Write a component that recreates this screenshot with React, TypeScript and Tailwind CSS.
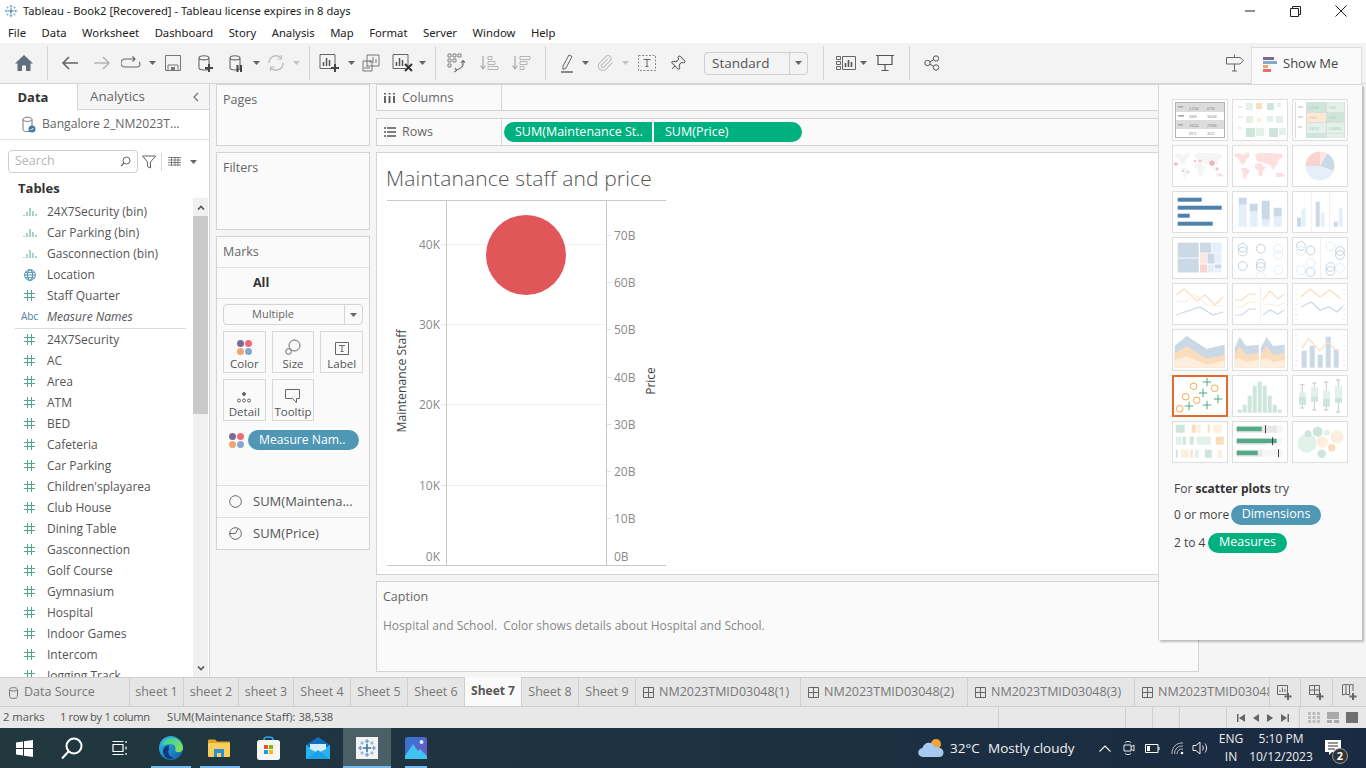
import React from "react";
import { Paperclip, Pin } from "lucide-react";

const fields = ["24X7Security", "AC", "Area", "ATM", "BED", "Cafeteria", "Car Parking", "Children'splayarea", "Club House", "Dining Table", "Gasconnection", "Golf Course", "Gymnasium", "Hospital", "Indoor Games", "Intercom", "Jogging Track"];
const sheets = [
  ["sheet 1", "w-[54px]"],
  ["sheet 2", "w-[55px]"],
  ["sheet 3", "w-[55px]"],
  ["Sheet 4", "w-[57px]"],
  ["Sheet 5", "w-[57px]"],
  ["Sheet 6", "w-[57px]"],
];

type RectT = [number, number, number, number, string];
const G1 = "#e2f1ea", G2 = "#cde5da", O1 = "#fdeedd", O2 = "#fbdcbc", B1 = "#e4eff9", B2 = "#cbd9e7", P1 = "#fde5e2", P2 = "#f8d3d0";

const Rects = ({ d }: { d: RectT[] }) => (
  <>
    {d.map((r, i) => (
      <rect key={i} x={r[0]} y={r[1]} width={r[2]} height={r[3]} fill={r[4]} />
    ))}
  </>
);

const Rings = ({ d }: { d: [number, number, string][] }) => (
  <>
    {d.map((c, i) => (
      <circle key={i} cx={c[0]} cy={c[1]} r="4.4" fill="none" stroke={c[2]} strokeWidth="1" />
    ))}
  </>
);

const Line = ({ p, c }: { p: string; c: string }) => <polyline points={p} fill="none" stroke={c} strokeWidth="1.2" />;

const SideTicks = () => (
  <>
    {[6, 11, 16, 21, 26, 31, 36].map((y) => (
      <g key={y}>
        <rect x="3" y={y} width="2.5" height="0.8" fill="#e8e8e8" />
        <rect x="51" y={y} width="2.5" height="0.8" fill="#e8e8e8" />
      </g>
    ))}
  </>
);

const Thumb = ({ children, selected }: { children?: React.ReactNode; selected?: boolean }) => (
  <svg viewBox="0 0 56 42" className="w-[56px] h-[42px] block">
    <rect x={selected ? 1 : 0.5} y={selected ? 1 : 0.5} width={selected ? 54 : 55} height={selected ? 40 : 41} fill="#fff" stroke={selected ? "#e06a30" : "#dedede"} strokeWidth={selected ? 2 : 1} />
    {children}
  </svg>
);

const World = ({ fill }: { fill: string }) => (
  <g fill={fill}>
    <path d="M2 9 L8 8 L11 10 L18 9 L17 12 L14 14 L13 17 L11 20 L8 17 L6 13 L3 12 Z" />
    <path d="M12 8 L17 7.500 L17 9 L13 10 Z" />
    <path d="M9 23 L14 23 L18 26 L15 30 L13 35 L12 35 L11 29 Z" />
    <path d="M23 10 L27 8 L38 8 L50 9 L51 12 L47 14 L46 18 L43 22 L41 25 L38 20 L34 19 L30 17 L26 17 L24 14 Z" />
    <path d="M23 19 L29 18 L31 21 L34 22 L31 26 L30 31 L27 31 L26 25 L23 23 Z" />
    <path d="M44 28 L50 28 L53 31 L50 32 L44 32 Z" />
  </g>
);

const ThumbGrid = () => (
  <div className="grid grid-cols-3 gap-1 w-[176px]">
    <Thumb>
      <Rects d={[[3, 3, 50, 36, "#b3b3b3"], [4, 4, 48, 34, "#fff"], [4, 4, 48, 9, "#dcdcdc"], [4, 21, 48, 9, "#dcdcdc"], [6, 7, 5, 1.6, "#a8a8a8"], [6, 16, 6, 1.6, "#a8a8a8"], [6, 25, 5, 1.6, "#a8a8a8"]]} />
      <g fontSize="4.4" fill="#8a8a8a" fontFamily="'Liberation Sans', sans-serif">
        <text x="17" y="10.5">1234</text><text x="35" y="10.5">678</text>
        <text x="17" y="19">368</text><text x="35" y="19">3034</text>
        <text x="17" y="27.5">2620</text><text x="35" y="27.5">2936</text>
        <text x="17" y="36">971</text><text x="35" y="36">322</text>
      </g>
    </Thumb>
    <Thumb>
      <Rects d={[[6, 7, 5, 2, "#eee"], [6, 17, 5, 2, "#eee"], [6, 28, 4, 2, "#eee"], [14, 4, 7, 7, G1], [24, 4, 6, 6, O2], [35, 4, 7, 7, G2], [45, 4, 4, 4, G1], [14, 17, 7, 7, G1], [25, 19, 4, 4, O1], [35, 17, 6, 6, G1], [44, 17, 7, 7, G1], [14, 29, 9, 9, G2], [24, 29, 8, 8, G1], [37, 29, 9, 9, G2], [47, 29, 7, 7, G1]]} />
    </Thumb>
    <Thumb>
      <Rects d={[[3, 3, 50, 36, "#dcdcdc"], [4, 3, 10, 36, "#fff"], [6, 7, 5, 2, "#ddd"], [6, 17, 5, 2, "#ddd"], [6, 27, 4, 2, "#ddd"], [15, 3, 19, 10, G2], [35, 3, 17, 10, G1], [15, 14, 19, 9, "#fde9d3"], [35, 14, 17, 9, G2], [15, 24, 19, 10, G1], [35, 24, 17, 10, G1], [15, 35, 19, 4, G2], [35, 35, 17, 4, G1]]} />
      <g fontSize="4.4" fill="#b5c9bf" fontFamily="'Liberation Sans', sans-serif">
        <text x="17" y="10">1234</text><text x="37" y="10">546</text>
        <text x="17" y="20" fill="#d9c3ad">368</text><text x="37" y="20">310</text>
        <text x="17" y="31">2620</text><text x="37" y="31">53890</text>
      </g>
    </Thumb>
    <Thumb>
      <World fill="#f5f5f5" />
      <g fill="#eec4c8">
        <circle cx="4" cy="19" r="2" /><circle cx="40" cy="18" r="2.6" fill="#e9b5bb" /><circle cx="28" cy="16" r="1.600" /><circle cx="45" cy="24" r="1.700" /><circle cx="11" cy="26" r="1.100" /><circle cx="16" cy="27" r="1.500" fill="#f8dcd4" /><circle cx="48" cy="30" r="1" /><circle cx="23" cy="16" r="1.200" />
      </g>
    </Thumb>
    <Thumb><World fill="#fde0dd" /></Thumb>
    <Thumb>
      <path d="M28 21 L13.5 21 A14.5 14.5 0 0 1 28 6.5 Z" fill={P2} />
      <path d="M28 21 L28 6.5 A14.5 14.5 0 0 1 35.25 8.44 Z" fill={P1} />
      <path d="M28 21 L35.25 8.44 A14.5 14.5 0 0 1 41.63 25.96 Z" fill={B2} />
      <path d="M28 21 L41.63 25.96 A14.5 14.5 0 0 1 13.5 21 Z" fill={B1} />
    </Thumb>
    <Thumb>
      <Rects d={[[5.7, 6.7, 24, 4, "#4f81ab"], [5.7, 14.7, 44, 4, "#4f81ab"], [5.7, 22.7, 12, 4, "#4f81ab"], [5.7, 30.7, 35, 4, "#4f81ab"]]} />
    </Thumb>
    <Thumb>
      <Rects d={[[6.7, 6.7, 8, 7, B2], [6.7, 13.7, 8, 22, B1], [17.7, 12.7, 8, 8, B2], [17.7, 20.7, 8, 15, B1], [29.7, 9.7, 8, 19, B2], [29.7, 28.7, 8, 7, B1], [41.7, 16.7, 8, 9, B2], [41.7, 25.7, 8, 10, B1]]} />
    </Thumb>
    <Thumb>
      <Rects d={[[19, 1, 0.8, 40, "#eee"], [37, 1, 0.8, 40, "#eee"], [5, 26.7, 4, 9, B2], [9.5, 17.7, 4, 18, B1], [23.7, 10.7, 4, 25, B2], [28.7, 21.7, 4, 14, B1], [41.7, 30.7, 4, 5, B2], [46.7, 16.7, 4, 19, B1]]} />
    </Thumb>
    <Thumb>
      <Rects d={[[5.7, 5.7, 21, 15, B2], [28, 5.7, 11, 10, B2], [39.5, 5.7, 10, 10, B1], [5.7, 21.5, 21, 14, B2], [28, 16.5, 7, 10, P1], [35.5, 16.5, 7, 10, B2], [43, 16.5, 6.5, 10, B1], [28, 27.5, 7, 8, P2], [35.5, 27.5, 7, 8, B1], [43, 27.5, 6.5, 4, B2], [43, 32.5, 6.5, 3, B1]]} />
    </Thumb>
    <Thumb>
      <Rings d={[[10.7, 10.7, "#c3d3e2"], [10.7, 14.5, "#c3d3e2"], [10.7, 29, "#c3d3e2"], [28.7, 11.7, "#c3d3e2"], [28.7, 26.5, "#c3d3e2"], [28.7, 30, "#c3d3e2"], [46.3, 11.7, B1], [46.3, 18, B1], [46.3, 33, B1], [28.7, 39, B1]]} />
    </Thumb>
    <Thumb>
      <Rings d={[[9, 9, "#c3d3e2"], [9, 14, B1], [18.5, 13.5, "#c3d3e2"], [18.5, 26, B1], [9, 33, B1], [18.5, 35, "#c3d3e2"], [38.5, 9.5, B1], [48, 14, "#c3d3e2"], [48, 18, "#c3d3e2"], [38.5, 30, "#c3d3e2"], [38.5, 34, "#c3d3e2"], [48, 31, B1]]} />
      <rect x="28" y="1" width="0.8" height="40" fill="#eee" />
    </Thumb>
    <Thumb>
      <Line p="4.7,11.7 12,5.7 25,18 33,12 43,22 51,14" c={O2} />
      <Line p="4,18 14,19 22,11 35,22 51,23" c={O1} />
      <Line p="4,32 28,24 41,32 51,29" c={B2} />
    </Thumb>
    <Thumb>
      <rect x="28" y="1" width="0.8" height="40" fill="#eee" />
      <Line p="3,17 10,17 17,11 24,11" c={O2} /><Line p="3,24 10,24 17,19 24,19" c={O1} /><Line p="3,32 10,32 17,26 24,26" c={B2} />
      <Line p="31,17 38,8 46,16 52,11" c={O2} /><Line p="31,22 38,21 46,23 52,20" c={O1} /><Line p="31,32 38,27 46,31 52,27" c={B2} />
    </Thumb>
    <Thumb>
      <SideTicks />
      <Line p="9,14 18,6 28,14 38,7 49,16" c={O2} />
      <Line p="9,24 19,19 28,27 37,24 45,29 51,23" c={B2} />
    </Thumb>
    <Thumb>
      <polygon points="2.7,16.7 14.7,7 34.7,19.7 52.7,15.7 52.7,38.7 2.7,38.7" fill={B2} />
      <polygon points="2.7,24 14.7,17.3 34.7,29.7 52.7,25.7 52.7,38.7 2.7,38.7" fill={O2} />
      <polygon points="2.7,31 14.7,27.3 34.7,35.7 52.7,31.7 52.7,38.7 2.7,38.7" fill={O1} />
    </Thumb>
    <Thumb>
      <polygon points="2.7,19 7.7,7.7 14,17 26.7,15.7 26.7,38.7 2.7,38.7" fill={B2} />
      <polygon points="2.7,25 7.7,17 14,26 26.7,24 26.7,38.7 2.7,38.7" fill={O2} />
      <polygon points="2.7,31 7.7,29 14,33 26.7,31 26.7,38.7 2.7,38.7" fill={O1} />
      <polygon points="28.7,19 34.7,7.7 41,17 52.7,15.7 52.7,38.7 28.7,38.7" fill={B2} />
      <polygon points="28.7,25 34.7,17 41,26 52.7,24 52.7,38.7 28.7,38.7" fill={O2} />
      <polygon points="28.7,31 34.7,29 41,33 52.7,31 52.7,38.7 28.7,38.7" fill={O1} />
    </Thumb>
    <Thumb>
      <SideTicks />
      <Rects d={[[9.7, 21.7, 5, 17, B2], [17.7, 16.7, 5, 22, B2], [25.7, 25.7, 5, 13, B2], [33.7, 7.7, 5, 31, B2], [41.7, 20.7, 5, 18, B2]]} />
      <Line p="9.7,19.7 16.7,9.7 27.7,21.7 35.7,13.7 46.7,22.7" c={O2} />
    </Thumb>
    <Thumb selected>
      <g fill="none" stroke="#f5a94f" strokeWidth="1">
        <circle cx="21.7" cy="11.3" r="3.3" /><circle cx="42.7" cy="13.3" r="3.3" /><circle cx="13.7" cy="21.7" r="3.3" /><circle cx="24.7" cy="25.3" r="3.3" /><circle cx="7.7" cy="33.7" r="3.3" />
      </g>
      <path d="M35 2.7v8.6M30.7 7h8.6M31 13.7v8.6M26.7 18h8.6M46 19.7v8.6M41.7 24h8.6M17 26.7v8.6M12.7 31h8.6M35 25.7v8.6M30.7 30h8.6" stroke="#4fa886" strokeWidth="1" fill="none" />
    </Thumb>
    <Thumb>
      <Rects d={[[5.7, 34.7, 4, 3, G2], [10.7, 29.7, 4, 8, G2], [15.7, 20.7, 4, 17, G2], [20.7, 10.7, 4, 27, G2], [25.7, 6.7, 4, 31, G2], [30.7, 10.7, 4, 27, G2], [35.7, 20.7, 4, 17, G2], [40.7, 29.7, 4, 8, G2], [45.7, 34.7, 4, 3, G2]]} />
    </Thumb>
    <Thumb>
      <path d="M10.3 9.7v23M8 9.7h4.6M8 33h4.6M22.3 8v27M20 8h4.6M20 35h4.6M34.3 7v28M32 7h4.6M32 35h4.6M46.3 5v32M44 5h4.6M44 37h4.6" stroke="#bbb" strokeWidth="0.8" fill="none" />
      <Rects d={[[7, 17.3, 7, 4.4, G1], [7, 21.7, 7, 8, G2], [19, 12.3, 7, 9.4, G1], [19, 21.7, 7, 5, G2], [31, 15.7, 7, 8, G1], [31, 23.7, 7, 8, G2], [43, 10.7, 7, 12, G1], [43, 22.7, 7, 5, G2]]} />
    </Thumb>
    <Thumb>
      <Rects d={[[3.7, 3.7, 9, 8, G2], [19.7, 3.7, 4, 8, O2], [24.7, 3.7, 4, 8, O1], [35.7, 3.7, 2, 8, O2], [41.7, 3.7, 8, 8, O1], [3.7, 15.7, 6, 8, G1], [10.7, 15.7, 3, 8, G2], [17.7, 15.7, 4, 8, G2], [24.7, 15.7, 14, 8, G1], [43.7, 15.7, 8, 8, O2], [3.7, 28.7, 2, 8, G2], [8.7, 28.7, 8, 8, O1], [18.7, 28.7, 2, 8, O2], [22.7, 28.7, 4, 8, G1], [32.7, 28.7, 7, 8, G2], [45.7, 28.7, 4, 8, O1]]} />
    </Thumb>
    <Thumb>
      <Rects d={[[4.7, 4.7, 46, 7, "#f4f6f8"], [4.7, 4.7, 40, 7, "#e8e8e8"], [4.7, 5.7, 25, 4.5, "#55a888"], [33, 4.2, 0.9, 8, "#333"], [4.7, 16.7, 46, 7, "#f4f6f8"], [4.7, 16.7, 29, 7, "#e8e8e8"], [4.7, 17.7, 40, 4.5, "#55a888"], [40, 16.2, 0.9, 8, "#333"], [4.7, 28.7, 46, 7, "#f4f6f8"], [4.7, 28.7, 25, 7, "#e8e8e8"], [4.7, 29.7, 21, 4.5, "#55a888"], [46, 28.2, 0.9, 8, "#333"]]} />
    </Thumb>
    <Thumb>
      <circle cx="15" cy="22.3" r="9.5" fill={G1} /><circle cx="16" cy="12.7" r="3.5" fill={G2} /><circle cx="25.7" cy="10.7" r="5" fill={G2} /><circle cx="35" cy="11.7" r="3" fill={G1} /><circle cx="45" cy="16" r="6.7" fill={O1} /><circle cx="30.3" cy="21" r="5.7" fill={O1} /><circle cx="39.7" cy="26.7" r="3.7" fill={O2} /><circle cx="29.7" cy="32.7" r="4.3" fill={G2} />
    </Thumb>
  </div>
);

const Caret = ({ light }: { light?: boolean }) => (
  <svg width="7" height="4" viewBox="0 0 7 4" className="shrink-0"><path d="M0 0h7L3.5 4z" fill={light ? "#c4c4c4" : "#666"} /></svg>
);

const Ic = ({ w = 20, h = 20, children }: { w?: number; h?: number; children: React.ReactNode }) => (
  <svg width={w} height={h} viewBox={`0 0 ${w} ${h}`} fill="none" className="shrink-0">{children}</svg>
);

const Sep = () => <div className="w-px h-[34px] bg-[#d4d4d4] shrink-0" />;
const cellClass = "flex items-center justify-center shrink-0";

const Drum = ({ color = "#666" }: { color?: string }) => (
  <path d="M3 5c0-3 10-3 10 0v10c0 1.5-2.5 2-5 2s-5-.5-5-2zM3 5c0 2.5 10 2.5 10 0" stroke={color} strokeWidth="1.1" />
);

const Toolbar = () => (
  <div className="h-[41px] flex items-center bg-[#f3f3f3] border-b border-[#d4d4d4] shrink-0 relative">
    <div className={`${cellClass} w-[47px]`}>
      <Ic><path d="M10 2 L19 10.5 H16.5 V18 H12 V12.5 H8 V18 H3.5 V10.5 H1 Z" fill="#5f6f7d" /></Ic>
    </div>
    <Sep />
    <div className={`${cellClass} w-[44px]`}>
      <Ic><path d="M18 10H3M9 4l-6 6 6 6" stroke="#666" strokeWidth="1.6" /></Ic>
    </div>
    <div className={`${cellClass} w-[20px]`}>
      <Ic><path d="M2 10h15M11 4l6 6-6 6" stroke="#b5b5b5" strokeWidth="1.6" /></Ic>
    </div>
    <div className={`${cellClass} w-[38px]`}>
      <Ic><path d="M14 6H4a3 3 0 0 0 0 8h12a3 3 0 0 0 2-5.2M11.5 3.5 14 6l-2.5 2.5" stroke="#666" strokeWidth="1.1" /></Ic>
    </div>
    <div className={`${cellClass} w-[4px]`}><Caret /></div>
    <div className={`${cellClass} w-[38px]`}>
      <Ic w={16} h={16}><path d="M.5.5h15v15H.5z" stroke="#777" /><path d="M3 10h10v5.5H3z" stroke="#777" /><path d="M6 12h4v3.5H6z" fill="#777" /></Ic>
    </div>
    <div className={`${cellClass} w-[26px]`}>
      <Ic w={18} h={20}><Drum /><path d="M13 11v8M9 15h8" stroke="#444" strokeWidth="2" /></Ic>
    </div>
    <div className={`${cellClass} w-[36px]`}>
      <Ic w={18} h={20}><Drum /><path d="M10.5 12v7M14 12v7" stroke="#444" strokeWidth="2" /></Ic>
    </div>
    <div className={`${cellClass} w-[4px]`}><Caret /></div>
    <div className={`${cellClass} w-[36px]`}>
      <Ic w={18} h={18}><path d="M2 9a7 7 0 0 1 12-5M16 9a7 7 0 0 1-12 5" stroke="#bdbdbd" strokeWidth="1.4" /><path d="M14.5 1v4h-4M3.5 17v-4h4" stroke="#bdbdbd" strokeWidth="1.2" /></Ic>
    </div>
    <div className={`${cellClass} w-[4px]`}><Caret light /></div>
    <div className="w-[11px] shrink-0" />
    <Sep />
    <div className={`${cellClass} w-[40px]`}>
      <Ic w={22} h={20}><path d="M1 1.5h15v14H1z" stroke="#666" /><path d="M4.5 13V9M7.5 13V5M10.5 13V7" stroke="#555" strokeWidth="1.5" /><path d="M16 11v8M12 15h8" stroke="#444" strokeWidth="2" /></Ic>
    </div>
    <div className={`${cellClass} w-[2px]`}><Caret /></div>
    <div className={`${cellClass} w-[38px]`}>
      <Ic w={18} h={18}><path d="M5 1h12v11H5zM1 7h9v10H1z" stroke="#777" fill="#f3f3f3" /><path d="M8 9V6M11 9V3M14 9V5M3 15v-2M5 15v-3M7 15v-2" stroke="#777" /></Ic>
    </div>
    <div className={`${cellClass} w-[26px]`}>
      <Ic w={22} h={20}><path d="M1 1.5h15v14H1z" stroke="#666" /><path d="M4.5 13V9M7.5 13V5M10.5 13V7" stroke="#555" strokeWidth="1.5" /><path d="M13 11l7 7M20 11l-7 7" stroke="#333" strokeWidth="2" /></Ic>
    </div>
    <div className={`${cellClass} w-[12px]`}><Caret /></div>
    <div className="w-[7px] shrink-0" />
    <Sep />
    <div className={`${cellClass} w-[42px]`}>
      <Ic w={20} h={20}><path d="M1 1h3v3H1zM6 1h3v3H6zM11 1h3v3h-3zM1 6h3v3H1zM6 6h3v3H6zM1 11h3v3H1z" stroke="#777" strokeWidth=".9" /><path d="M16 8c1 5-2 8-7 9M8 15l1.5 2.3L7.5 19M14 10l2-2.5 2 2" stroke="#666" strokeWidth="1.1" /></Ic>
    </div>
    <div className={`${cellClass} w-[24px]`}>
      <Ic w={20} h={16}><path d="M3 1v12M.5 10.5 3 14l2.5-3.5" stroke="#aaa" strokeWidth="1.2" /><path d="M8 1.5h4v3H8zM8 6.5h7v3H8zM8 11.5h10v3H8z" stroke="#b5b5b5" /></Ic>
    </div>
    <div className={`${cellClass} w-[40px]`}>
      <Ic w={20} h={16}><path d="M3 1v12M.5 10.5 3 14l2.5-3.5" stroke="#aaa" strokeWidth="1.2" /><path d="M8 1.5h10v3H8zM8 6.5h7v3H8zM8 11.5h4v3H8z" stroke="#b5b5b5" /></Ic>
    </div>
    <div className="w-[3px] shrink-0" />
    <Sep />
    <div className={`${cellClass} w-[34px] ml-1`}>
      <Ic w={14} h={20}><path d="M3 13 9 2l3 1.5L6 15l-3 1.5z" stroke="#666" strokeWidth="1" /><path d="M1 19h12" stroke="#666" strokeWidth="1.5" /></Ic>
    </div>
    <div className={`${cellClass} w-[2px]`}><Caret /></div>
    <div className={`${cellClass} w-[38px]`}>
      <Paperclip size={18} color="#bbb" strokeWidth={1.4} />
    </div>
    <div className={`${cellClass} w-[3px]`}><Caret light /></div>
    <div className={`${cellClass} w-[40px]`}>
      <Ic w={18} h={16}><path d="M.5.5h17v15H.5z" stroke="#888" strokeDasharray="2 1.5" /><path d="M5.5 4.5h7M9 4.5v7M7.5 11.5h3" stroke="#666" /></Ic>
    </div>
    <div className={`${cellClass} w-[20px]`}>
      <Pin size={17} color="#555" strokeWidth={1.4} className="rotate-45" />
    </div>
    <div className="w-[17px] shrink-0" />
    <div className="w-[104px] h-[23px] shrink-0 flex border border-[#cfcfcf] rounded-sm items-center text-[13.5px] text-[#555]">
      <span className="flex-1 pl-[7px]">Standard</span>
      <div className={`${cellClass} w-[18px] h-full border-l border-[#cfcfcf]`}><Caret /></div>
    </div>
    <div className="w-[15px] shrink-0" />
    <Sep />
    <div className={`${cellClass} w-[32px] ml-[6px]`}>
      <Ic w={20} h={15}><path d="M.5.5h4v3h-4zM.5 5.500h4v3h-4zM.5 10.500h4v3h-4zM6.500.5h13v13h-13z" stroke="#666" /><path d="M9.500 11V7M12.500 11V4M15.500 11V6" stroke="#555" strokeWidth="1.6" /></Ic>
    </div>
    <div className={`${cellClass} w-[2px]`}><Caret /></div>
    <div className={`${cellClass} w-[42px]`}>
      <Ic w={18} h={18}><path d="M0 1.500h18M2 1.500v9h14v-9M9 10.500v6M5.500 16.500h7" stroke="#555" strokeWidth="1.2" /></Ic>
    </div>
    <div className="w-[3px] shrink-0" />
    <Sep />
    <div className={`${cellClass} w-[44px]`}>
      <Ic w={16} h={16}><circle cx="3.500" cy="8" r="2.700" stroke="#555" /><circle cx="12" cy="3.500" r="2.700" stroke="#555" /><circle cx="12" cy="12.500" r="2.700" stroke="#555" /><path d="M6 6.700l3.700-2M6 9.300l3.700 2" stroke="#555" /></Ic>
    </div>
    <div className="flex-1" />
    <div className={`${cellClass} w-[32px]`}>
      <Ic w={18} h={18}><path d="M.5 3.500h13.500l3.500 3-3.500 3.500H.5zM8.500.5v3M8.500 10v7M6 17h5" stroke="#666" strokeWidth="1" /></Ic>
    </div>
    <div className="w-[111px] h-[37px] self-end -mb-px z-20 bg-[#fafafa] border-t border-x border-[#dcdcdc] flex items-center pl-[11px] pb-[5px] gap-[6px] text-[13px] text-[#444]">
      <svg width="14" height="16" viewBox="0 0 14 16" className="shrink-0">
        <rect y="1" width="11" height="3" fill="#7b6a94" /><rect y="5" width="14" height="3" fill="#85a8cf" /><rect y="9" width="5" height="3" fill="#f0a56e" /><rect y="13" width="8" height="3" fill="#ee6b73" />
      </svg>
      Show Me
    </div>
    <div className="w-1 shrink-0" />
  </div>
);

const HashIcon = () => (
  <svg width="11" height="11" viewBox="0 0 11 11"><path d="M3.500 0v11M7.500 0v11M0 3.500h11M0 7.500h11" stroke="#4fa886" strokeWidth="1" /></svg>
);
const BinIcon = () => (
  <svg width="14" height="10" viewBox="0 0 14 10"><path d="M1 9V8M4 9V5M7 9V1M10 9V4M13 9V7" stroke="#4fa886" strokeWidth="1" /></svg>
);
const GlobeIcon = () => (
  <svg width="12" height="12" viewBox="0 0 12 12" fill="none" stroke="#4f8faf"><circle cx="6" cy="6" r="5.400" /><ellipse cx="6" cy="6" rx="2.500" ry="5.400" /><path d="M.6 6h10.800M1.500 3.300h9M1.500 8.700h9" /></svg>
);

const FieldRow = ({ icon, name, italic }: { icon: React.ReactNode; name: string; italic?: boolean }) => (
  <div className="h-[21px] flex items-center text-[12px] text-[#555] whitespace-nowrap shrink-0">
    <div className="w-[47px] pl-[20px] pr-[8px] flex justify-center shrink-0">{icon}</div>
    <span className={italic ? "italic" : ""}>{name}</span>
  </div>
);

const Sidebar = () => (
  <div className="w-[210px] shrink-0 flex flex-col bg-white border-r border-[#d4d4d4]">
    <div className="h-[26px] flex shrink-0">
      <div className="w-[77px] flex items-center justify-center pr-[11px] pt-[1px] font-bold text-[#333] text-[13px]">Data</div>
      <div className="flex-1 flex items-center bg-[#f5f5f5] border-l border-b border-[#d4d4d4] pl-[12px] pt-[1px] text-[#666] text-[13.3px]">
        Analytics
        <svg width="7" height="10" viewBox="0 0 7 10" className="ml-[47px]"><path d="M6 1 2 5l4 4" stroke="#777" strokeWidth="1.200" fill="none" /></svg>
      </div>
    </div>
    <div className="h-[30px] flex items-center shrink-0 border-b border-[#e2e2e2] pl-[22px] gap-[6px] text-[12.2px] text-[#666]">
      <svg width="14" height="17" viewBox="0 0 14 17" fill="none">
        <path d="M1 3.500c0-3 9-3 9 0v10c0 1.500-2 2-4.500 2S1 15 1 13.500zM1 3.500c0 2.500 9 2.500 9 0" stroke="#777" />
        <circle cx="10" cy="13" r="3.500" fill="#3d7ea6" /><path d="M8.500 13l1 1 2-2" stroke="#fff" />
      </svg>
      Bangalore 2_NM2023T...
    </div>
    <div className="flex items-center mt-[10px] pl-2 shrink-0">
      <div className="w-[130px] h-[23px] border border-[#cfcfcf] rounded-sm flex items-center justify-between px-[6px] text-[12.5px] text-[#b5b5b5]">
        Search
        <svg width="11" height="11" viewBox="0 0 11 11" fill="none"><circle cx="6.500" cy="4.500" r="3.500" stroke="#666" /><path d="M4 7 1 10" stroke="#666" strokeWidth="1.300" /></svg>
      </div>
      <svg width="14" height="14" viewBox="0 0 14 14" fill="none" className="ml-1"><path d="M.5 1h13L8.500 7v6l-3-1.500V7z" stroke="#666" /></svg>
      <div className="w-px h-[18px] bg-[#d8d8d8] ml-[5px]" />
      <svg width="13" height="9" viewBox="0 0 13 9" className="ml-[6px]"><path d="M0 .5h13M0 3h13M0 5.500h13M0 8h13M3.500 0v9M7 0v9M10 0v9" stroke="#666" strokeWidth=".8" /></svg>
      <div className="ml-[9px]"><Caret /></div>
    </div>
    <div className="h-[17px] flex items-center pl-[18px] mt-[7px] font-bold text-[13px] text-[#333] shrink-0">Tables</div>
    <div className="flex-1 min-h-0 flex overflow-hidden mt-[1px]">
      <div className="w-[193px] shrink-0 overflow-hidden pt-[3px]">
        <FieldRow icon={<BinIcon />} name="24X7Security (bin)" />
        <FieldRow icon={<BinIcon />} name="Car Parking (bin)" />
        <FieldRow icon={<BinIcon />} name="Gasconnection (bin)" />
        <FieldRow icon={<GlobeIcon />} name="Location" />
        <FieldRow icon={<HashIcon />} name="Staff Quarter" />
        <FieldRow icon={<span className="text-[10px] text-[#4f7f9f] not-italic">Abc</span>} name="Measure Names" italic />
        <div className="h-px bg-[#dcdcdc] ml-[15px] mr-[7px] mt-[1px]" />
        {fields.map((f) => (
          <FieldRow key={f} icon={<HashIcon />} name={f} />
        ))}
      </div>
      <div className="w-[15px] shrink-0 flex flex-col bg-[#f0f0f0]">
        <div className="h-[18px] flex items-center justify-center">
          <svg width="8" height="5" viewBox="0 0 8 5"><path d="M1 4.500 4 1.500l3 3" stroke="#555" strokeWidth="1.600" fill="none" /></svg>
        </div>
        <div className="h-[198px] bg-[#c9c9c9]" />
        <div className="flex-1" />
        <div className="h-[17px] flex items-center justify-center">
          <svg width="8" height="5" viewBox="0 0 8 5"><path d="M1 .5 4 3.500l3-3" stroke="#555" strokeWidth="1.600" fill="none" /></svg>
        </div>
      </div>
    </div>
  </div>
);

const Dots = () => (
  <div className="grid grid-cols-2 gap-[1px] w-[15px] shrink-0">
    <span className="w-[7px] h-[7px] rounded-full bg-[#7b6a94]" />
    <span className="w-[7px] h-[7px] rounded-full bg-[#ee6b73]" />
    <span className="w-[7px] h-[7px] rounded-full bg-[#f0a56e]" />
    <span className="w-[7px] h-[7px] rounded-full bg-[#85a8cf]" />
  </div>
);

const MarkBtn = ({ label, icon }: { label: string; icon: React.ReactNode }) => (
  <div className="h-[42px] border border-[#d8d8d8] flex flex-col items-center text-[11.5px] text-[#555]">
    <div className="h-[25px] flex items-end justify-center pb-[2px]">{icon}</div>
    <span className="leading-[14px]">{label}</span>
  </div>
);

const Cards = () => (
  <div className="w-[166px] shrink-0 flex flex-col gap-[6px] px-[6px] text-[12.5px] text-[#666]">
    <div className="h-[62px] bg-[#fafafa] border border-[#d4d4d4] px-[6px] pt-[6px]">Pages</div>
    <div className="h-[78px] bg-[#fafafa] border border-[#d4d4d4] px-[6px] pt-[6px]">Filters</div>
    <div className="h-[314px] bg-[#fafafa] border border-[#d4d4d4] flex flex-col">
      <div className="h-[31px] px-[6px] flex items-center border-b border-[#e0e0e0] shrink-0">Marks</div>
      <div className="h-[31px] flex items-center pl-[36px] border-b border-[#e0e0e0] shrink-0 font-bold text-[#333] text-[12.5px]">All</div>
      <div className="mx-[6px] mt-[5px] h-[21px] flex border border-[#d4d4d4] rounded-sm items-center shrink-0 text-[11px]">
        <span className="flex-1 text-center pr-[22px]">Multiple</span>
        <div className={`${cellClass} w-[18px] h-full border-l border-[#d4d4d4]`}><Caret /></div>
      </div>
      <div className="mx-[6px] mt-[6px] grid grid-cols-3 gap-[6px] shrink-0">
        <MarkBtn label="Color" icon={<Dots />} />
        <MarkBtn label="Size" icon={<svg width="16" height="16" viewBox="0 0 16 16" fill="none" stroke="#666"><circle cx="9.500" cy="6.500" r="5.500" /><circle cx="3.500" cy="12.500" r="2.800" fill="#fafafa" /></svg>} />
        <MarkBtn label="Label" icon={<svg width="14" height="13" viewBox="0 0 14 13" fill="none" stroke="#666"><path d="M.5.5h13v12H.5z" /><path d="M4 3.500h6M7 3.500v6M5.500 9.500h3" /></svg>} />
        <MarkBtn label="Detail" icon={<svg width="14" height="11" viewBox="0 0 14 11" fill="none" stroke="#666"><circle cx="7" cy="2" r="1.500" fill="#666" /><circle cx="2" cy="8.500" r="1.500" /><circle cx="7" cy="8.500" r="1.500" /><circle cx="12" cy="8.500" r="1.500" /></svg>} />
        <MarkBtn label="Tooltip" icon={<svg width="15" height="14" viewBox="0 0 15 14" fill="none" stroke="#666"><path d="M.5.500h14v9h-3v4l-4-4h-7z" /></svg>} />
      </div>
      <div className="flex items-center mt-[9px] pl-[12px] gap-[4px] shrink-0">
        <Dots />
        <div className="w-[111px] h-[20px] rounded-full bg-[#4f97b5] text-white flex items-center pl-[11px] text-[12.2px]">Measure Nam..</div>
      </div>
      <div className="flex-1" />
      <div className="h-[32px] flex items-center border-t border-[#e0e0e0] shrink-0 text-[13px] text-[#555]">
        <div className="w-[36px] flex justify-center"><svg width="13" height="13" viewBox="0 0 13 13" fill="none"><circle cx="6.500" cy="6.500" r="5.800" stroke="#666" /></svg></div>
        SUM(Maintena...
      </div>
      <div className="h-[32px] flex items-center border-t border-[#e0e0e0] shrink-0 text-[13px] text-[#555]">
        <div className="w-[36px] flex justify-center"><svg width="13" height="13" viewBox="0 0 13 13" fill="none" stroke="#666"><circle cx="6.500" cy="6.500" r="5.800" /><path d="M6.500 6.500 9 1.500M6.500 6.500H.7" /></svg></div>
        SUM(Price)
      </div>
    </div>
  </div>
);

const Chart = () => {
  const left: [string, number, number][] = [["40K", 244, 249], ["30K", 324, 329], ["20K", 404, 409], ["10K", 485, 490], ["0K", 565, 561]];
  const right: [string, number, number][] = [["70B", 235, 240], ["60B", 282, 287], ["50B", 329, 334], ["40B", 377, 382], ["30B", 424, 429], ["20B", 471, 476], ["10B", 518, 523], ["0B", 565, 561]];
  return (
    // origin of the drawing is x 386, y 199 of the page
    <svg width="282" height="372" viewBox="386 199 282 372" className="block" fontFamily="'Open Sans', sans-serif">
      <path d="M387 200.500h279M387 565.500h279M446.500 200v366M606.500 200v366" stroke="#c8c8c8" fill="none" />
      {left.slice(0, 4).map(([, y]) => (
        <path key={y} d={`M447 ${y + 0.5}h159`} stroke="#f0f0f0" />
      ))}
      {left.slice(0, 4).map(([, y]) => (
        <path key={y} d={`M441 ${y + 0.5}h5`} stroke="#e4e4e4" />
      ))}
      {right.slice(0, 7).map(([, y]) => (
        <path key={y} d={`M607 ${y + 0.5}h4`} stroke="#e4e4e4" />
      ))}
      <circle cx="526" cy="255" r="40" fill="#e15759" />
      {left.map(([t, , ty]) => (
        <text key={t} x="440" y={ty} textAnchor="end" fontSize="12" fill="#8a8a8a">{t}</text>
      ))}
      {right.map(([t, , ty]) => (
        <text key={t} x="614" y={ty} fontSize="12" fill="#8a8a8a">{t}</text>
      ))}
      <text transform="translate(406 381) rotate(-90)" textAnchor="middle" fontSize="12.2" fill="#444">Maintenance Staff</text>
      <text transform="translate(655 381) rotate(-90)" textAnchor="middle" fontSize="12" fill="#444">Price</text>
    </svg>
  );
};

const Canvas = () => (
  <div className="flex-1 min-w-0 flex flex-col mr-[167px] text-[12.5px] text-[#666]">
    <div className="h-[27px] flex bg-[#fafafa] border border-[#d4d4d4] shrink-0">
      <div className="w-[125px] flex items-center pl-[7px] pt-[1px] gap-[7px] border-r border-[#d4d4d4]">
        <svg width="11" height="10" viewBox="0 0 11 10"><path d="M1 3v7M5.500 3v7M10 3v7" stroke="#555" strokeWidth="1.800" /><path d="M1 0v1.500M5.500 0v1.500M10 0v1.500" stroke="#555" strokeWidth="1.800" /></svg>
        Columns
      </div>
    </div>
    <div className="h-[28px] mt-[7px] flex bg-[#fafafa] border border-[#d4d4d4] shrink-0">
      <div className="w-[125px] flex items-center pl-[7px] gap-[6px] border-r border-[#d4d4d4]">
        <svg width="12" height="10" viewBox="0 0 12 10"><path d="M0 1h2M3 1h9M0 5h2M3 5h9M0 9h2M3 9h9" stroke="#555" strokeWidth="1.500" /></svg>
        Rows
      </div>
      <div className="flex items-center pl-[2px] gap-[2px] text-white text-[12.5px]">
        <div className="w-[148px] h-[20px] bg-[#00b180] rounded-l-full pl-[11px] flex items-center whitespace-nowrap">SUM(Maintenance St..</div>
        <div className="w-[148px] h-[20px] bg-[#00b180] rounded-r-full pl-[11px] flex items-center">SUM(Price)</div>
      </div>
    </div>
    <div className="h-[423px] mt-[6px] bg-white border border-[#d4d4d4] shrink-0 pl-[9px] flex flex-col">
      <div className="h-[46px] flex items-center text-[21px] font-light text-[#555] font-['Open_Sans',sans-serif] pt-[5px] whitespace-nowrap tracking-[0.15px]">Maintanance staff and price</div>
      <Chart />
    </div>
    <div className="h-[91px] mt-[6px] bg-[#fafafa] border border-[#d4d4d4] shrink-0 px-[6px] pt-[6px]">
      <div>Caption</div>
      <div className="mt-[10px] text-[12px] text-[#888]">Hospital and School.&nbsp; Color shows details about Hospital and School.</div>
    </div>
  </div>
);

const ShowMePanel = () => (
  <div className="absolute left-[1158px] top-0 w-[204px] h-[556px] z-10 bg-[#fafafa] border-l border-t border-[#d8d8d8] shadow-[2px_2px_2px_rgba(0,0,0,0.25)] pl-[13px] pt-[14px] text-[12px] text-[#444]">
    <ThumbGrid />
    <div className="mt-[17px] h-[18px] flex items-center pl-[2px]">For&nbsp;<b className="text-[#333]">scatter plots</b>&nbsp;try</div>
    <div className="mt-[7px] h-[20px] flex items-center pl-[2px]">
      <span className="w-[57px] shrink-0">0 or more</span>
      <div className="w-[90px] h-[20px] rounded-full bg-[#4f97b5] text-white flex items-center justify-center pb-px text-[12.5px]">Dimensions</div>
    </div>
    <div className="mt-[8px] h-[20px] flex items-center pl-[2px]">
      <span className="w-[34px] shrink-0">2 to 4</span>
      <div className="w-[79px] h-[20px] rounded-full bg-[#00b180] text-white flex items-center justify-center pb-px text-[12.5px]">Measures</div>
    </div>
  </div>
);

const SheetTab = ({ label, width }: { label: string; width: string }) => (
  <div className={`${width} shrink-0 border-r border-[#cfcfcf] flex items-center justify-center pt-px`}>{label}</div>
);

const DashGlyph = () => (
  <svg width="11" height="11" viewBox="0 0 11 11" fill="none" stroke="#666" className="shrink-0"><path d="M.5.500h10v10H.5zM.5 5.500h10M5.500.5v10" /></svg>
);

const NmTab = ({ label, width }: { label: string; width: string }) => (
  <div className={`${width} shrink-0 border-r border-[#cfcfcf] flex items-center pl-[7px] pt-px gap-[5px] overflow-hidden whitespace-nowrap`}>
    <DashGlyph />
    {label}
  </div>
);

const Plus = () => <path d="M11 9v7M7.500 12.500h7" stroke="#666" strokeWidth="2" />;

const Tabs = () => (
  <div className="h-[30px] flex bg-[#e6e6e6] border-y border-[#cfcfcf] text-[12.5px] text-[#777] shrink-0">
    <div className="w-[130px] shrink-0 border-r border-[#cfcfcf] flex items-center pl-[9px] pt-px gap-[6px]">
      <svg width="9" height="12" viewBox="0 0 9 12" fill="none" stroke="#777"><path d="M.5 2.500c0-2.500 8-2.500 8 0v7c0 2.500-8 2.500-8 0zM.5 2.500c0 2 8 2 8 0" /></svg>
      Data Source
    </div>
    {sheets.map(([l, w]) => (
      <SheetTab key={l} label={l} width={w} />
    ))}
    <div className="w-[57px] shrink-0 bg-[#fafafa] border-r border-[#cfcfcf] flex items-center justify-center font-bold text-[12px] text-[#555] -mt-px pb-[1px]">Sheet 7</div>
    <SheetTab label="Sheet 8" width="w-[57px]" />
    <SheetTab label="Sheet 9" width="w-[57px]" />
    <NmTab label="NM2023TMID03048(1)" width="w-[165px]" />
    <NmTab label="NM2023TMID03048(2)" width="w-[167px]" />
    <NmTab label="NM2023TMID03048(3)" width="w-[167px]" />
    <NmTab label="NM2023TMID03048(4)" width="w-[135px]" />
    <div className="w-[32px] shrink-0 border-x border-[#cfcfcf] flex items-center justify-center -ml-px">
      <svg width="16" height="16" viewBox="0 0 16 16" fill="none"><path d="M.5 1.500h10v9H.5z" stroke="#666" /><path d="M3 8V6M5.500 8V3.500M8 8V5" stroke="#666" /><Plus /></svg>
    </div>
    <div className="w-[32px] shrink-0 border-r border-[#cfcfcf] flex items-center justify-center">
      <svg width="16" height="16" viewBox="0 0 16 16" fill="none"><path d="M.5 1.500h10v9H.5zM.5 6h10M5.500 1.500v9" stroke="#666" /><Plus /></svg>
    </div>
    <div className="flex-1 flex items-center justify-center">
      <svg width="16" height="16" viewBox="0 0 16 16" fill="none"><path d="M.5 1v10l3.500-1 3.500 1V1L4 0zM4 0v10M7.500 1 11 0v7" stroke="#666" /><Plus /></svg>
    </div>
  </div>
);

const StatusBar = () => (
  <div className="h-[21px] flex bg-[#e8e8e8] text-[11.2px] text-[#555] shrink-0">
    <div className="w-[60px] pl-[3px] flex items-center shrink-0">2 marks</div>
    <div className="w-[107px] flex items-center shrink-0 tracking-[-0.35px]">1 row by 1 column</div>
    <div className="w-[832px] flex items-center shrink-0 border-r border-[#d0d0d0]">SUM(Maintenance Staff): 38,538</div>
    <div className="w-[127px] shrink-0 border-r border-[#d0d0d0]" />
    <div className="w-[27px] shrink-0 border-r border-[#d0d0d0]" />
    <div className="w-[27px] shrink-0 border-r border-[#d0d0d0]" />
    <div className="w-[47px] shrink-0 border-r border-[#d0d0d0]" />
    <div className="w-[73px] shrink-0 border-r border-[#d0d0d0] flex items-center justify-around px-[6px]">
      <svg width="8" height="8" viewBox="0 0 8 8" fill="#666"><path d="M0 0h1.500v8H0zM8 0v8L2 4z" /></svg>
      <svg width="6" height="8" viewBox="0 0 6 8" fill="#666"><path d="M6 0v8L0 4z" /></svg>
      <svg width="6" height="8" viewBox="0 0 6 8" fill="#666"><path d="M0 0v8l6-4z" /></svg>
      <svg width="8" height="8" viewBox="0 0 8 8" fill="#666"><path d="M6.500 0H8v8H6.500zM0 0v8l6-4z" /></svg>
    </div>
    <div className="flex-1 flex items-center justify-around px-[5px]">
      <svg width="12" height="11" viewBox="0 0 12 11" fill="#bdbdbd"><path d="M0 0h3v3H0zM4.500 0h3v3h-3zM9 0h3v3H9zM0 4h3v3H0zM4.500 4h3v3h-3zM9 4h3v3H9zM0 8h3v3H0zM4.500 8h3v3h-3zM9 8h3v3H9z" /></svg>
      <svg width="12" height="11" viewBox="0 0 12 11" fill="#aaa"><path d="M0 0h12v7H0zM0 8h5v3H0zM7 8h5v3H7z" /></svg>
      <div className="w-[12px] h-[11px] bg-[#707070]" />
    </div>
  </div>
);

const TableauMark = ({ size }: { size: number }) => (
  <svg width={size} height={size} viewBox="0 0 20 20" fill="none" className="shrink-0">
    <path d="M10 6v8M6 10h8" stroke="#3f78a5" strokeWidth="1.600" />
    <path d="M10 1v4.500M7.800 3.200h4.400M10 14.500V19M7.800 16.800h4.400M3.200 7.800v4.400M1 10h4.500M16.800 7.800v4.400M14.500 10H19" stroke="#5f93bb" strokeWidth="1.100" />
    <path d="M5 3.200v3.600M3.200 5h3.600M15 3.200v3.600M13.200 5h3.600M5 13.200v3.600M3.200 15h3.600M15 13.200v3.600M13.200 15h3.600" stroke="#7fb0d0" />
  </svg>
);

const Taskbar = () => (
  <div className="h-10 flex items-center bg-linear-to-r from-[#21383f] to-[#1a2a42] text-white shrink-0">
    <div className={`${cellClass} w-12 h-10`}>
      <svg width="17" height="17" viewBox="0 0 17 17" fill="#fff"><path d="M0 2.500 7 1.500v6.500H0zM8 1.300 17 0v8H8zM0 9h7v6.500L0 14.500zM8 9h9v8l-9-1.300z" /></svg>
    </div>
    <div className={`${cellClass} w-12 h-10`}>
      <svg width="22" height="23" viewBox="0 0 22 23" fill="none" stroke="#fff" strokeWidth="2"><circle cx="13" cy="9" r="7.500" /><path d="M7.500 14.500 1 21.500" /></svg>
    </div>
    <div className={`${cellClass} w-12 h-10`}>
      <svg width="17" height="16" viewBox="0 0 17 16" fill="none" stroke="#fff"><path d="M1 4.500h10v7H1zM.5 1.500h11M.5 14.500h11M14 1v2M14 6.500v3M14 13v2" strokeWidth="1.200" /></svg>
    </div>
    <div className={`${cellClass} w-12 h-10 ml-[3px] relative`}>
      <svg width="24" height="24" viewBox="0 0 24 24">
        <defs>
          <linearGradient id="edgeA" x1="0" y1="0" x2="1" y2="1"><stop offset="0" stopColor="#35c1f1" /><stop offset="1" stopColor="#0c59a4" /></linearGradient>
          <linearGradient id="edgeB" x1="0" y1="0" x2="1" y2="1"><stop offset="0" stopColor="#2fd0a0" /><stop offset="1" stopColor="#8ee05a" /></linearGradient>
        </defs>
        <circle cx="12" cy="12" r="12" fill="url(#edgeA)" />
        <path d="M3 9C5 3 12 0 18 3c4 2 6 6 6 9 0 3-3 5-6 4-2-.5-2-2-1.500-3 .5-2-1-5-5-5-3 0-6 1-8.500 1z" fill="url(#edgeB)" />
        <path d="M10 13c-2 3 0 8 5 9-1 .5-2 1-4 1-3 0-7-3-7-8 0-3 3-6 7-6-2 1-1 3-1 4z" fill="#0f3c78" />
      </svg>
      <div className="absolute bottom-0 left-[4px] w-[40px] h-[2px] bg-[#76b9ed]" />
    </div>
    <div className={`${cellClass} w-12 h-10 relative`}>
      <svg width="22" height="18" viewBox="0 0 22 18">
        <path d="M0 1.500A1 1 0 0 1 1 .5h6l2 2h12a1 1 0 0 1 1 1V5H0z" fill="#e0a526" />
        <rect y="4" width="22" height="14" rx="1" fill="#f7cf5a" />
        <path d="M6 10h10v8h-3v-4H9v4H6z" fill="#2f8fd6" />
      </svg>
      <div className="absolute bottom-0 left-[5px] w-[40px] h-[2px] bg-[#76b9ed]" />
    </div>
    <div className={`${cellClass} w-12 h-10 ml-[1px]`}>
      <svg width="23" height="24" viewBox="0 0 23 24">
        <path d="M7 6V3.500C7 1.500 9 1 11.500 1S16 1.500 16 3.500V6" fill="none" stroke="#2aa4e4" strokeWidth="1.600" />
        <rect y="4" width="23" height="20" rx="2.500" fill="#f6f6f6" />
        <rect x="7" y="9" width="4" height="4" fill="#f25022" /><rect x="12" y="9" width="4" height="4" fill="#7fba00" /><rect x="7" y="14" width="4" height="4" fill="#00a4ef" /><rect x="12" y="14" width="4" height="4" fill="#ffb900" />
      </svg>
    </div>
    <div className={`${cellClass} w-12 h-10 ml-[2px]`}>
      <svg width="24" height="22" viewBox="0 0 24 22">
        <path d="M0 8 12 0l12 8v14H0z" fill="#0f6fbd" />
        <path d="M0 8l12 8 12-8v14H0z" fill="#2ab3f0" />
        <path d="M4 7h16v5l-8 4-8-4z" fill="#d5eefb" />
        <path d="M0 22l12-9 12 9z" fill="#1ca0e6" />
      </svg>
    </div>
    <div className={`${cellClass} w-12 h-10 ml-[1px] bg-[#4b5f66] relative`}>
      <div className="w-[22px] h-[22px] bg-[#f1f3f4] flex items-center justify-center">
        <TableauMark size={20} />
      </div>
      <div className="absolute bottom-0 left-0 w-12 h-[2px] bg-[#76b9ed]" />
    </div>
    <div className={`${cellClass} w-12 h-10 ml-[1px] relative`}>
      <svg width="22" height="22" viewBox="0 0 22 22">
        <defs><linearGradient id="photoA" x1="0" y1="0" x2="1" y2="1"><stop offset="0" stopColor="#2b7bd0" /><stop offset="1" stopColor="#7c4fc9" /></linearGradient></defs>
        <rect width="22" height="22" rx="3" fill="url(#photoA)" />
        <circle cx="16.500" cy="5" r="2" fill="#dfeefc" />
        <path d="M0 19 8 7l5 7 2-2 7 7v3H0z" fill="#3fc4ef" />
      </svg>
      <div className="absolute bottom-0 left-[13px] w-[22px] h-[2px] bg-[#76b9ed]" />
    </div>
    <div className="flex-1" />
    <svg width="26" height="20" viewBox="0 0 26 20" className="shrink-0">
      <circle cx="18" cy="6" r="5" fill="#f3a23c" />
      <path d="M5 19a4.500 4.500 0 0 1-.5-9C5.500 6 9 4 12.500 5c2.500.5 4 2.500 4.500 4.500 5-1 8.500 2 8.500 5 0 3-2 4.500-4.500 4.500z" fill="#a5c9ef" />
    </svg>
    <div className="ml-[6px] w-[38px] shrink-0 text-[13.500px] text-[#f2f2f2] whitespace-nowrap">32°C</div>
    <div className="w-[86px] shrink-0 text-[13.500px] text-[#f2f2f2] whitespace-nowrap">Mostly cloudy</div>
    <svg width="12" height="7" viewBox="0 0 12 7" fill="none" stroke="#fff" className="shrink-0 ml-[25px]"><path d="M.5 6.500 6 1l5.500 5.500" strokeWidth="1.100" /></svg>
    <svg width="12" height="16" viewBox="0 0 12 16" fill="none" stroke="#e8e8e8" className="shrink-0 ml-[12px]"><path d="M1 5h7v6H1zM8 7l3-2v6l-3-2M2 2.500c2-1.500 4-1.500 6 0M2 13.500c2 1.500 4 1.500 6 0" /></svg>
    <svg width="15" height="9" viewBox="0 0 15 9" fill="none" stroke="#fff" className="shrink-0 ml-[10px]"><path d="M.5.500h12.500v8H.5zM14 3v3" /><path d="M2 2h3v5H2z" fill="#fff" stroke="none" /></svg>
    <svg width="14" height="13" viewBox="0 0 14 13" fill="none" stroke="#ddd" className="shrink-0 ml-[11px]"><path d="M1 12a10 10 0 0 1 11-11M3.500 12a7.500 7.500 0 0 1 8.500-8M6 12a5 5 0 0 1 6-5" strokeWidth=".8" /><circle cx="11" cy="11" r="1.300" fill="#fff" stroke="none" /></svg>
    <svg width="17" height="14" viewBox="0 0 17 14" fill="none" stroke="#eee" className="shrink-0 ml-[7px]"><path d="M1 4.500h3L8 1v12L4 9.500H1zM10.500 4.500c1 1.500 1 3.500 0 5M13 2.500c2 2.500 2 6.500 0 9" /></svg>
    <div className="w-[30px] ml-[7px] text-center text-[12px] leading-[18px] text-[#eee] shrink-0">ENG<br />IN</div>
    <div className="w-[70px] text-center text-[12px] leading-[18px] text-[#eee] shrink-0 whitespace-nowrap">5:10 PM<br />10/12/2023</div>
    <div className="w-[50px] shrink-0 flex justify-center relative pr-[16px]">
      <svg width="16" height="16" viewBox="0 0 16 16"><path d="M0 0h16v12H7l-3 3v-3H0z" fill="#fff" /><path d="M3 3h10M3 6h10M3 9h7" stroke="#333" /></svg>
      <div className="absolute left-[16px] top-[8px] w-[16px] h-[16px] rounded-full bg-[#333] border border-[#999] text-[11px] font-bold flex items-center justify-center">2</div>
    </div>
  </div>
);

const App = () => {
  return (
    <div className="w-[1366px] h-[768px] overflow-hidden flex flex-col bg-white font-['Open_Sans',sans-serif]">
      <div className="h-[22px] flex items-center shrink-0 pl-[4px] gap-[5px] text-[11.2px] text-[#222] font-['Noto_Sans',sans-serif]">
        <TableauMark size={14} />
        <span>Tableau - Book2 [Recovered] - Tableau license expires in 8 days</span>
        <div className="flex-1" />
        <svg width="10" height="2" viewBox="0 0 10 2"><path d="M0 1h10" stroke="#222" /></svg>
        <svg width="11" height="11" viewBox="0 0 11 11" fill="none" stroke="#222" className="ml-[30px]"><path d="M.5 2.500h8v8h-8zM2.500 2.500v-2h8v8h-2" /></svg>
        <svg width="12" height="12" viewBox="0 0 12 12" fill="none" stroke="#222" className="ml-[29px] mr-[19px]"><path d="M.5.500l11 11M11.500.500l-11 11" /></svg>
      </div>
      <div className="h-[21px] flex items-center shrink-0 pl-2 pt-px gap-[15.5px] text-[11.3px] text-[#222] font-['Noto_Sans',sans-serif]">
        {["File", "Data", "Worksheet", "Dashboard", "Story", "Analysis", "Map", "Format", "Server", "Window", "Help"].map((m) => (
          <span key={m}>{m}</span>
        ))}
      </div>
      <Toolbar />
      <div className="h-[593px] flex bg-[#f5f5f5] shrink-0 relative">
        <Sidebar />
        <Cards />
        <Canvas />
        <ShowMePanel />
      </div>
      <Tabs />
      <StatusBar />
      <Taskbar />
    </div>
  );
};

export default App;
